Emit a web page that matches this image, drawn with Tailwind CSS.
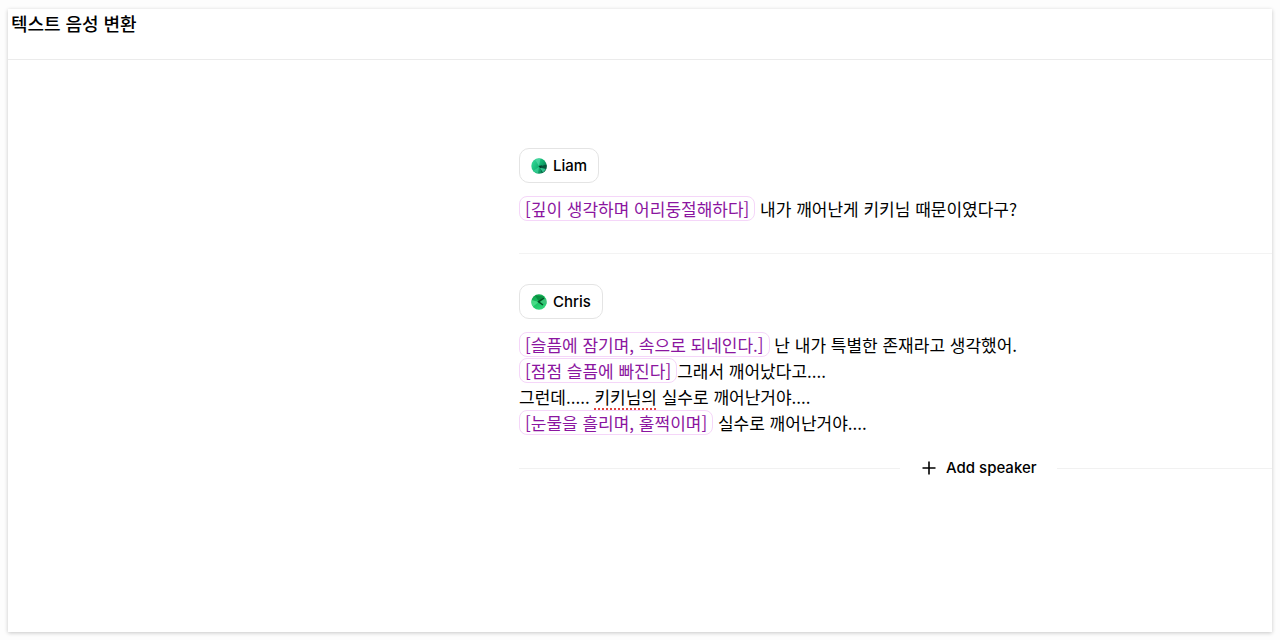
<!DOCTYPE html>
<html lang="ko">
<head>
  <meta charset="UTF-8">
  <meta name="viewport" content="width=device-width, initial-scale=1.0">
  <title>텍스트 음성 변환</title>
  <script src="https://cdn.jsdelivr.net/npm/@tailwindcss/browser@4"></script>
</head>
<body class="min-h-screen flex bg-[#fdfdfd] px-2 pt-[9px] pb-2 font-['Inter','Noto_Sans_CJK_KR',sans-serif] text-[15px] text-black">
  <div class="flex-1 flex flex-col bg-white shadow-[0_1px_4px_rgba(0,0,0,0.22)]">
    <header class="h-[51px] border-b border-[#ebebeb] px-[3px] pt-[2px]">
      <h1 class="text-lg leading-7 font-medium">텍스트 음성 변환</h1>
    </header>

    <main class="flex-1 pl-[511px] pt-[88px]">
      <!-- Liam -->
      <section class="pb-[31px] border-b border-[#f3f3f3]">
        <button type="button" class="flex items-center gap-[6px] h-[35px] px-[11px] border border-[#e4e4e4] rounded-[10px] font-medium leading-6">
          <svg class="size-4" viewBox="0 0 16 16" aria-hidden="true">
            <defs>
              <linearGradient id="liam" x1="0" y1="0.2" x2="1" y2="0.8">
                <stop offset="0" stop-color="#35d99a" />
                <stop offset="0.5" stop-color="#12b573" />
                <stop offset="1" stop-color="#056b48" />
              </linearGradient>
            </defs>
            <circle cx="8" cy="8" r="7.7" fill="url(#liam)" />
            <path d="M8.5 8.5 15.5 6.5A7.7 7.7 0 0 1 11 15Z" fill="#07553b" />
            <path d="M8.5 9.5 15 11 12 14.500Z" fill="#2fc08a" />
            <path d="M8 8 4 1.500 9.500 0.500Z" fill="#5fe0b0" opacity=".6" />
            <path d="M8 9 2 13 7 15.500Z" fill="#46d9a0" opacity=".6" />
            <path d="M7.500 8 11 7.200 9.500 10.200Z" fill="#033d2a" />
          </svg>
          Liam
        </button>
        <div contenteditable="true" spellcheck="false" role="textbox" aria-label="Liam" class="mt-[13px] font-['Noto_Sans_CJK_KR',sans-serif] text-[17px] leading-[26px] outline-none">
          <p><span class="inline-block border border-[#f5d6f9] rounded-lg px-[5px] leading-[23px] text-[#8b15a0]">[깊이 생각하며 어리둥절해하다]</span> 내가 깨어난게 키키님 때문이였다구?</p>
        </div>
      </section>

      <!-- Chris -->
      <section class="pt-[30px] pb-5">
        <button type="button" class="flex items-center gap-[6px] h-[35px] px-[11px] border border-[#e4e4e4] rounded-[10px] font-medium leading-6">
          <svg class="size-4" viewBox="0 0 16 16" aria-hidden="true">
            <defs>
              <linearGradient id="chris" x1="0.2" y1="0" x2="0.7" y2="1">
                <stop offset="0" stop-color="#0d9e48" />
                <stop offset="0.5" stop-color="#18c463" />
                <stop offset="1" stop-color="#35d67c" />
              </linearGradient>
            </defs>
            <circle cx="8" cy="8" r="7.7" fill="url(#chris)" />
            <path d="M8 8 0.500 6A7.700 7.700 0 0 0 2 12.500Z" fill="#5ce596" opacity=".7" />
            <path d="M8 8 4 1.500 13 2.500Z" fill="#078038" opacity=".7" />
            <path d="M9 8 15 4.500 15.500 10Z" fill="#3fc27a" />
            <path d="M13 4 7.500 7.800 12 11" fill="none" stroke="#064d25" stroke-width="1.500" />
          </svg>
          Chris
        </button>
        <div contenteditable="true" spellcheck="false" role="textbox" aria-label="Chris" class="mt-[13px] font-['Noto_Sans_CJK_KR',sans-serif] text-[17px] leading-[26px] outline-none">
          <p><span class="inline-block border border-[#f5d6f9] rounded-lg px-[5px] leading-[23px] text-[#8b15a0]">[슬픔에 잠기며, 속으로 되네인다.]</span> 난 내가 특별한 존재라고 생각했어.</p>
          <p><span class="inline-block border border-[#f5d6f9] rounded-lg px-[5px] leading-[23px] text-[#8b15a0]">[점점 슬픔에 빠진다]</span>그래서 깨어났다고....</p>
          <p>그런데..... <span class="underline decoration-dotted decoration-[#e0443e] decoration-2 underline-offset-4">키키님의</span> 실수로 깨어난거야....</p>
          <p><span class="inline-block border border-[#f5d6f9] rounded-lg px-[5px] leading-[23px] text-[#8b15a0]">[눈물을 흘리며, 훌쩍이며]</span> 실수로 깨어난거야....</p>
        </div>
      </section>

      <div class="flex items-center">
        <div class="w-[381px] h-px bg-[#f1f1f1]"></div>
        <button type="button" class="flex items-center gap-2 h-6 px-5 font-medium leading-6">
          <svg class="size-[18px]" viewBox="0 0 18 18" fill="none" stroke="currentColor" stroke-width="1.6" aria-hidden="true">
            <path d="M9 2.500v13M2.500 9h13" />
          </svg>
          Add speaker
        </button>
        <div class="flex-1 h-px bg-[#f1f1f1]"></div>
      </div>
    </main>
  </div>
</body>
</html>
